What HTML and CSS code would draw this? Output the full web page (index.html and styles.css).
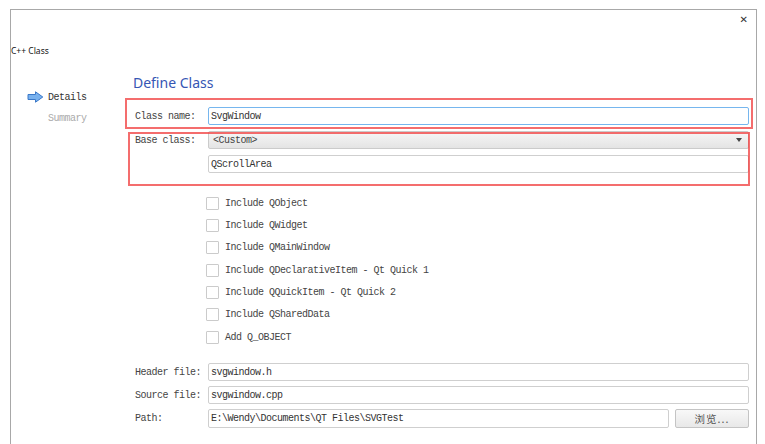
FILE: index.html
```html
<!DOCTYPE html>
<html lang="zh">
<head>
    <meta charset="UTF-8">
    <title>C++ Class Wizard</title>
    <link rel="stylesheet" href="styles.css">
</head>
<body>
    <div class="window">
        <div class="titlebar">
            <span class="close">&#x2715;</span>
        </div>
        <div class="wizard-title">C++ Class</div>

        <div class="content">
            <!-- 左側のステップ一覧 -->
            <ul class="steps">
                <li class="step current">
                    <svg class="step-arrow" width="17" height="12" viewBox="0 0 17 12">
                        <path d="M1 3.5 H8.5 V0.8 L15.8 6 L8.5 11.2 V8.5 H1 Z" fill="#78b1ee" stroke="#3b78c8" stroke-width="1"/>
                    </svg>
                    Details
                </li>
                <li class="step">Summary</li>
            </ul>

            <div class="page">
                <h1>Define Class</h1>

                <div class="form top-form">
                    <label>Class name:</label>
                    <div class="field focused">SvgWindow</div>

                    <label>Base class:</label>
                    <div class="combo">&lt;Custom&gt;<span class="combo-arrow"></span></div>

                    <span></span>
                    <div class="field">QScrollArea</div>
                </div>

                <div class="checks">
                    <div class="check"><span class="box"></span>Include QObject</div>
                    <div class="check"><span class="box"></span>Include QWidget</div>
                    <div class="check"><span class="box"></span>Include QMainWindow</div>
                    <div class="check"><span class="box"></span>Include QDeclarativeItem - Qt Quick 1</div>
                    <div class="check"><span class="box"></span>Include QQuickItem - Qt Quick 2</div>
                    <div class="check"><span class="box"></span>Include QSharedData</div>
                    <div class="check"><span class="box"></span>Add Q_OBJECT</div>
                </div>

                <div class="form files-form">
                    <label>Header file:</label>
                    <div class="field">svgwindow.h</div>

                    <label>Source file:</label>
                    <div class="field">svgwindow.cpp</div>

                    <label>Path:</label>
                    <div class="path-row">
                        <div class="field">E:\Wendy\Documents\QT Files\SVGTest</div>
                        <button class="browse">浏览...</button>
                    </div>
                </div>
            </div>
        </div>

        <div class="footer"></div>

        <!-- 注釈の赤枠 -->
        <div class="mark mark-name"></div>
        <div class="mark mark-base"></div>
    </div>
</body>
</html>
```

FILE: styles.css
```css
body {
    margin: 0;
    background-color: white;
    font-family: "Liberation Mono", "DejaVu Sans Mono", monospace;
    overflow: hidden;
}

.window {
    position: relative;
    margin: 9px 0 0 10px;
    width: 745px;
    height: 440px;
    border: 1px solid #a8a8a8;
    border-bottom: none;
    display: flex;
    flex-direction: column;
}

.titlebar {
    height: 35px;
    display: flex;
    justify-content: flex-end;
    align-items: flex-start;
}

.close {
    font-family: "DejaVu Sans", sans-serif;
    font-size: 10px;
    color: #333;
    margin: 4px 8px 0 0;
}

.wizard-title {
    font-family: "Noto Sans", sans-serif;
    font-size: 8.5px;
    line-height: 12px;
    height: 12px;
    color: #111;
}

.content {
    display: flex;
    flex: 1;
}

/* ステップ一覧 */
.steps {
    list-style: none;
    margin: 0;
    padding: 32px 0 0 16px;
    width: 106px;
}

.step {
    display: flex;
    align-items: center;
    gap: 4px;
    height: 16px;
    font-size: 10px;
    letter-spacing: -0.5px;
    color: #aaa;
    padding-left: 21px;
    margin-bottom: 5px;
}

.step.current {
    color: #333;
    padding-left: 0;
}

.step-arrow {
    display: block;
}

.page {
    flex: 1;
    padding: 16px 7px 0 0;
}

h1 {
    margin: 0 0 14px 0;
    font-family: "Noto Sans", sans-serif;
    font-weight: normal;
    font-size: 14px;
    line-height: 20px;
    height: 20px;
    color: #3656b4;
}

.form {
    display: grid;
    grid-template-columns: 73px 1fr;
    grid-auto-rows: 18px;
    row-gap: 6px;
    padding-left: 2px;
    font-size: 10px;
    letter-spacing: -0.5px;
    color: #444;
}

.form label {
    display: flex;
    align-items: center;
}

.field {
    border: 1px solid #cfcfcf;
    border-radius: 2px;
    background: white;
    padding-left: 2px;
    display: flex;
    align-items: center;
    color: #333;
    box-sizing: border-box;
    height: 18px;
}

.field.focused {
    border-color: #76b6ee;
}

.combo {
    position: relative;
    border: 1px solid #cbcbcb;
    border-radius: 2px;
    background: linear-gradient(#f6f6f6, #e4e4e4);
    padding-left: 4px;
    display: flex;
    align-items: center;
    color: #444;
    box-sizing: border-box;
    height: 18px;
}

.combo-arrow {
    position: absolute;
    right: 6px;
    top: 6px;
    border-left: 3.5px solid transparent;
    border-right: 3.5px solid transparent;
    border-top: 4px solid #444;
}

/* チェックボックス */
.checks {
    margin-top: 19px;
    padding-left: 73px;
    font-size: 10px;
    letter-spacing: -0.5px;
    color: #444;
}

.check {
    display: flex;
    align-items: center;
    gap: 6px;
    height: 22.33px;
}

.box {
    width: 11px;
    height: 11px;
    border: 1px solid #cbcbcb;
    border-radius: 1px;
    background: white;
}

.files-form {
    margin-top: 15px;
    row-gap: 5px;
}

.path-row {
    display: flex;
    gap: 6px;
}

.path-row .field {
    flex: 1;
    height: 19px;
}

.browse {
    width: 74px;
    height: 19px;
    padding: 0;
    border: 1px solid #c4c4c4;
    border-radius: 2px;
    background: linear-gradient(#f8f8f8, #e8e8e8);
    font-family: "Noto Sans CJK SC", sans-serif;
    font-size: 10.5px;
    letter-spacing: 1px;
    color: #555;
}

.footer {
    height: 6px;
    margin-top: auto;
    background-color: #f0f0f0;
}

/* 赤枠 */
.mark {
    position: absolute;
    border: 2px solid rgba(240, 60, 60, 0.75);
    box-sizing: border-box;
}

.mark-name {
    left: 114px;
    top: 88px;
    width: 628px;
    height: 31px;
}

.mark-base {
    left: 117px;
    top: 122px;
    width: 622px;
    height: 54px;
}
```
